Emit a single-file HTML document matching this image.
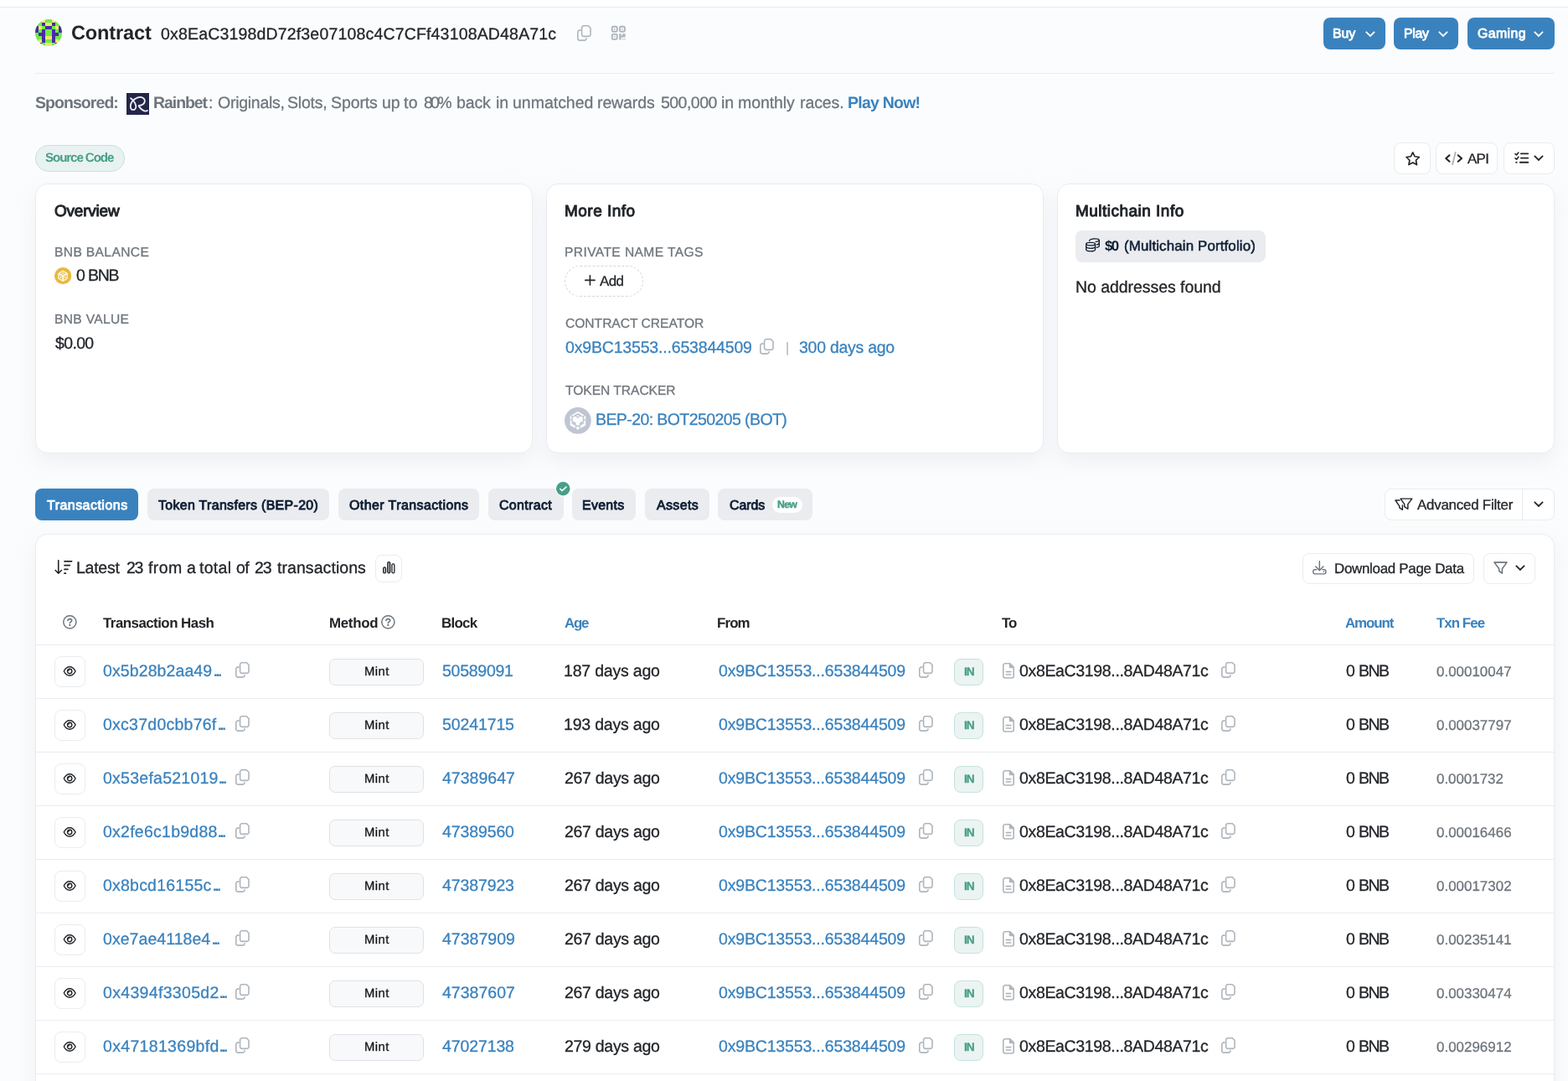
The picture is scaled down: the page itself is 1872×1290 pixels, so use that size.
<!DOCTYPE html>
<html lang="en"><head><meta charset="utf-8"><title>Contract Address 0x8EaC3198dD72f3e07108c4C7CFf43108AD48A71c | BscScan</title>
<style>
html,body{margin:0;padding:0}
body{width:1872px;height:1290px;overflow:hidden;background:#fbfcfd;font-family:"Liberation Sans", sans-serif;position:relative;color:#222529}
.a{position:absolute;box-sizing:border-box}
.t{white-space:pre;will-change:transform;text-rendering:geometricPrecision}
svg.a{overflow:visible}
</style></head><body>
<div class="a" style="left:0px;top:0px;width:1872px;height:8px;background:#fff;border-radius:0px;"></div>
<div class="a" style="left:0px;top:8px;width:1872px;height:1px;background:#e9ecef;border-radius:0px;"></div>
<svg class="a" style="left:42px;top:23px;" width="32" height="32" viewBox="0 0 32 32"><defs><clipPath id="bk"><circle cx="16" cy="16" r="16"/></clipPath></defs><g clip-path="url(#bk)"><rect x="0" y="0" width="4.05" height="4.05" fill="#6eeb4a"/><rect x="4" y="0" width="4.05" height="4.05" fill="#6eeb4a"/><rect x="8" y="0" width="4.05" height="4.05" fill="#ebe96b"/><rect x="12" y="0" width="4.05" height="4.05" fill="#6eeb4a"/><rect x="16" y="0" width="4.05" height="4.05" fill="#6eeb4a"/><rect x="20" y="0" width="4.05" height="4.05" fill="#ebe96b"/><rect x="24" y="0" width="4.05" height="4.05" fill="#6eeb4a"/><rect x="28" y="0" width="4.05" height="4.05" fill="#6eeb4a"/><rect x="0" y="4" width="4.05" height="4.05" fill="#6eeb4a"/><rect x="4" y="4" width="4.05" height="4.05" fill="#6eeb4a"/><rect x="8" y="4" width="4.05" height="4.05" fill="#4a2ba5"/><rect x="12" y="4" width="4.05" height="4.05" fill="#ebe96b"/><rect x="16" y="4" width="4.05" height="4.05" fill="#ebe96b"/><rect x="20" y="4" width="4.05" height="4.05" fill="#4a2ba5"/><rect x="24" y="4" width="4.05" height="4.05" fill="#6eeb4a"/><rect x="28" y="4" width="4.05" height="4.05" fill="#6eeb4a"/><rect x="0" y="8" width="4.05" height="4.05" fill="#4a2ba5"/><rect x="4" y="8" width="4.05" height="4.05" fill="#ebe96b"/><rect x="8" y="8" width="4.05" height="4.05" fill="#6eeb4a"/><rect x="12" y="8" width="4.05" height="4.05" fill="#4a2ba5"/><rect x="16" y="8" width="4.05" height="4.05" fill="#4a2ba5"/><rect x="20" y="8" width="4.05" height="4.05" fill="#6eeb4a"/><rect x="24" y="8" width="4.05" height="4.05" fill="#ebe96b"/><rect x="28" y="8" width="4.05" height="4.05" fill="#4a2ba5"/><rect x="0" y="12" width="4.05" height="4.05" fill="#4a2ba5"/><rect x="4" y="12" width="4.05" height="4.05" fill="#6eeb4a"/><rect x="8" y="12" width="4.05" height="4.05" fill="#4a2ba5"/><rect x="12" y="12" width="4.05" height="4.05" fill="#6eeb4a"/><rect x="16" y="12" width="4.05" height="4.05" fill="#6eeb4a"/><rect x="20" y="12" width="4.05" height="4.05" fill="#4a2ba5"/><rect x="24" y="12" width="4.05" height="4.05" fill="#6eeb4a"/><rect x="28" y="12" width="4.05" height="4.05" fill="#4a2ba5"/><rect x="0" y="16" width="4.05" height="4.05" fill="#6eeb4a"/><rect x="4" y="16" width="4.05" height="4.05" fill="#4a2ba5"/><rect x="8" y="16" width="4.05" height="4.05" fill="#4a2ba5"/><rect x="12" y="16" width="4.05" height="4.05" fill="#6eeb4a"/><rect x="16" y="16" width="4.05" height="4.05" fill="#6eeb4a"/><rect x="20" y="16" width="4.05" height="4.05" fill="#4a2ba5"/><rect x="24" y="16" width="4.05" height="4.05" fill="#4a2ba5"/><rect x="28" y="16" width="4.05" height="4.05" fill="#6eeb4a"/><rect x="0" y="20" width="4.05" height="4.05" fill="#6eeb4a"/><rect x="4" y="20" width="4.05" height="4.05" fill="#6eeb4a"/><rect x="8" y="20" width="4.05" height="4.05" fill="#4a2ba5"/><rect x="12" y="20" width="4.05" height="4.05" fill="#ebe96b"/><rect x="16" y="20" width="4.05" height="4.05" fill="#ebe96b"/><rect x="20" y="20" width="4.05" height="4.05" fill="#4a2ba5"/><rect x="24" y="20" width="4.05" height="4.05" fill="#6eeb4a"/><rect x="28" y="20" width="4.05" height="4.05" fill="#6eeb4a"/><rect x="0" y="24" width="4.05" height="4.05" fill="#6eeb4a"/><rect x="4" y="24" width="4.05" height="4.05" fill="#ebe96b"/><rect x="8" y="24" width="4.05" height="4.05" fill="#4a2ba5"/><rect x="12" y="24" width="4.05" height="4.05" fill="#6eeb4a"/><rect x="16" y="24" width="4.05" height="4.05" fill="#6eeb4a"/><rect x="20" y="24" width="4.05" height="4.05" fill="#4a2ba5"/><rect x="24" y="24" width="4.05" height="4.05" fill="#ebe96b"/><rect x="28" y="24" width="4.05" height="4.05" fill="#6eeb4a"/><rect x="0" y="28" width="4.05" height="4.05" fill="#6eeb4a"/><rect x="4" y="28" width="4.05" height="4.05" fill="#4a2ba5"/><rect x="8" y="28" width="4.05" height="4.05" fill="#6eeb4a"/><rect x="12" y="28" width="4.05" height="4.05" fill="#ebe96b"/><rect x="16" y="28" width="4.05" height="4.05" fill="#ebe96b"/><rect x="20" y="28" width="4.05" height="4.05" fill="#6eeb4a"/><rect x="24" y="28" width="4.05" height="4.05" fill="#4a2ba5"/><rect x="28" y="28" width="4.05" height="4.05" fill="#6eeb4a"/></g></svg>
<svg class="a" style="left:688.7px;top:30.1px;" width="16.8" height="18.9" viewBox="0 0 16.8 18.9"><g fill="none" stroke="#aeb5bc" stroke-width="1.6" stroke-linejoin="round" stroke-linecap="round"><path d="M7.8 0.8h5.5l2.7 2.7v7.7a2.2 2.2 0 0 1-2.2 2.2H7.8a2.2 2.2 0 0 1-2.2-2.2V3a2.2 2.2 0 0 1 2.2-2.2z"/><path d="M4.1 6.1H3a2.2 2.2 0 0 0-2.2 2.2v7.6a2.2 2.2 0 0 0 2.2 2.2h5.8a2.2 2.2 0 0 0 2.2-2.2V15.9"/></g></svg>
<svg class="a" style="left:730.1px;top:31.3px;" width="17" height="17" viewBox="0 0 17 17"><g fill="none" stroke="#aeb5bc" stroke-width="1.9"><rect x="0.75" y="0.75" width="6" height="6" rx="1.4"/><rect x="9.9" y="0.75" width="6" height="6" rx="1.4"/><rect x="0.75" y="9.9" width="6" height="6" rx="1.4"/></g><rect x="3" y="3" width="1.5" height="1.5" fill="#aeb5bc"/><rect x="12.15" y="3" width="1.5" height="1.5" fill="#aeb5bc"/><rect x="3" y="12.15" width="1.5" height="1.5" fill="#aeb5bc"/><path d="M9.2 9.2h2.6v2.2h1.4v-2.2h3.4v4.2h-5v3.2H9.2z" fill="#aeb5bc"/><rect x="13" y="15.2" width="1.3" height="1.3" fill="#aeb5bc"/><rect x="15.3" y="15.2" width="1.3" height="1.3" fill="#aeb5bc"/></svg>
<div class="a" style="left:1580px;top:21px;width:74px;height:38px;background:#3a82be;border-radius:8px;"></div>
<svg class="a" style="left:1629.6px;top:36.65px;" width="11.9" height="6.8" viewBox="0 0 11.9 6.8"><path d="M0.8 0.8L5.95 5.8999999999999995L11.1 0.8" fill="none" stroke="#fff" stroke-width="1.75" stroke-linecap="butt" stroke-linejoin="miter"/></svg>
<div class="a" style="left:1664px;top:21px;width:77px;height:38px;background:#3a82be;border-radius:8px;"></div>
<svg class="a" style="left:1717.45px;top:36.65px;" width="11.9" height="6.8" viewBox="0 0 11.9 6.8"><path d="M0.8 0.8L5.95 5.8999999999999995L11.1 0.8" fill="none" stroke="#fff" stroke-width="1.75" stroke-linecap="butt" stroke-linejoin="miter"/></svg>
<div class="a" style="left:1752px;top:21px;width:104px;height:38px;background:#3a82be;border-radius:8px;"></div>
<svg class="a" style="left:1831.35px;top:36.65px;" width="11.9" height="6.8" viewBox="0 0 11.9 6.8"><path d="M0.8 0.8L5.95 5.8999999999999995L11.1 0.8" fill="none" stroke="#fff" stroke-width="1.75" stroke-linecap="butt" stroke-linejoin="miter"/></svg>
<div class="a" style="left:42px;top:87px;width:1814px;height:1px;background:#e9ecef;border-radius:0px;"></div>
<div class="a" style="left:150px;top:110px;width:29px;height:28px;background:#fff;border-radius:0px;"></div>
<div class="a" style="left:151px;top:111px;width:27px;height:26px;background:#23264a;border-radius:0px;"></div>
<svg class="a" style="left:151px;top:111px;" width="27" height="26" viewBox="0 0 27 26"><path d="M5 6.2C7.2 7.6 10.2 11 11.2 15C11.9 18.2 10.1 20.2 7.9 20.1C5.4 20 4.2 17.5 5 14C5.7 11 7.7 8.6 10.2 7C12.7 5.5 15.5 4.6 18 5.1C20.9 5.8 22.5 8.3 21.6 10.9C20.7 13.4 17.6 14.9 14.6 15.2C16 17.8 18.5 20.3 21.4 21.3C22.9 21.8 24.1 21.5 24.9 21" fill="none" stroke="#efeff5" stroke-width="1.8" stroke-linecap="round" stroke-linejoin="round"/></svg>
<div class="a" style="left:42px;top:173px;width:107px;height:31.7px;background:#e8f2f1;border-radius:16px;border:1px solid #c6e2dc;"></div>
<div class="a" style="left:1664px;top:170.4px;width:43.5px;height:37.2px;background:#fff;border-radius:8px;border:1px solid #e9ecef;"></div>
<div class="a" style="left:1714.3px;top:170.4px;width:74.10000000000014px;height:37.2px;background:#fff;border-radius:8px;border:1px solid #e9ecef;"></div>
<div class="a" style="left:1794.5px;top:170.4px;width:61.200000000000045px;height:37.2px;background:#fff;border-radius:8px;border:1px solid #e9ecef;"></div>
<svg class="a" style="left:1678.1px;top:180.7px;" width="17.4" height="16.8" viewBox="0 0 17.4 16.8"><path d="M8.7 0.9l2.35 4.85 5.35 0.75-3.9 3.75 0.95 5.3L8.7 13l-4.75 2.55 0.95-5.3L1 6.5l5.35-0.75z" fill="none" stroke="#222529" stroke-width="1.7" stroke-linejoin="round"/></svg>
<svg class="a" style="left:1724.9px;top:180.55px;" width="21.4" height="16.3" viewBox="0 0 21.4 16.3"><g fill="none" stroke-linecap="round" stroke-linejoin="round"><path d="M5.5 4.27L1.3 8L5.5 11.75M15.76 4.27L20.05 8L15.76 11.75" stroke="#222529" stroke-width="2.1"/><path d="M12.66 0.9L9.08 15.2" stroke="#a9adb2" stroke-width="1.7"/></g></svg>
<svg class="a" style="left:1807.8px;top:181px;" width="17.2" height="14" viewBox="0 0 17.2 14"><g fill="none" stroke="#222529" stroke-linecap="round" stroke-linejoin="round"><path d="M7.8 2.4H16.4M7.8 7.6H16.4" stroke-width="1.6"/><path d="M6.9 12.8H16.3" stroke-width="1.9"/><path d="M1 2.6L2.6 4L4.9 1.05M1 7.8L2.6 9.2L4.9 6.25" stroke-width="1.6"/></g><rect x="1.45" y="11.85" width="1.9" height="1.9" fill="#222529"/></svg>
<svg class="a" style="left:1831.4px;top:185.15px;" width="11.9" height="6.8" viewBox="0 0 11.9 6.8"><path d="M0.8 0.8L5.95 5.8999999999999995L11.1 0.8" fill="none" stroke="#222529" stroke-width="1.75" stroke-linecap="butt" stroke-linejoin="miter"/></svg>
<div class="a" style="left:42px;top:219px;width:593.8px;height:321.6px;background:#fff;border-radius:14.5px;border:1px solid #e9ecef;box-shadow:0 10.4px 25px rgba(189,197,209,0.2);"></div>
<div class="a" style="left:652.1px;top:219px;width:593.8px;height:321.6px;background:#fff;border-radius:14.5px;border:1px solid #e9ecef;box-shadow:0 10.4px 25px rgba(189,197,209,0.2);"></div>
<div class="a" style="left:1262.2px;top:219px;width:593.8px;height:321.6px;background:#fff;border-radius:14.5px;border:1px solid #e9ecef;box-shadow:0 10.4px 25px rgba(189,197,209,0.2);"></div>
<svg class="a" style="left:64.85px;top:319.2px;" width="20.3" height="20.3" viewBox="0 0 20.3 20.3"><circle cx="10.15" cy="10.15" r="10.15" fill="#e8b93f"/><polygon points="10.10,3.95 15.64,7.15 15.64,13.55 10.10,16.75 4.56,13.55 4.56,7.15" fill="#fffdf6" stroke="#fffdf6" stroke-width="0.5" stroke-linejoin="round"/><polygon points="10.10,4.91 13.98,7.15 10.10,9.39 6.22,7.15" fill="#e8b93f" fill-opacity="0.8"/><circle cx="10.10" cy="7.15" r="0.83" fill="#fffdf6"/><polygon points="5.39,8.59 9.27,10.83 9.27,15.31 5.39,13.07" fill="#e8b93f" fill-opacity="0.8"/><circle cx="7.33" cy="11.95" r="0.83" fill="#fffdf6"/><polygon points="14.81,8.59 14.81,13.07 10.93,15.31 10.93,10.83" fill="#e8b93f" fill-opacity="0.8"/><circle cx="12.87" cy="11.95" r="0.83" fill="#fffdf6"/></svg>
<div class="a" style="left:674px;top:317px;width:94px;height:37px;background:#fff;border-radius:18.5px;border:1px dashed #d3d6da;"></div>
<svg class="a" style="left:697.7px;top:327.8px;" width="12.8" height="12.8" viewBox="0 0 12.8 12.8"><path d="M6.4 0.7v11.4M0.7 6.4h11.4" stroke="#222529" stroke-width="1.6" stroke-linecap="round"/></svg>
<svg class="a" style="left:907px;top:404.3px;" width="16.8" height="18.9" viewBox="0 0 16.8 18.9"><g fill="none" stroke="#aeb5bc" stroke-width="1.6" stroke-linejoin="round" stroke-linecap="round"><path d="M7.8 0.8h5.5l2.7 2.7v7.7a2.2 2.2 0 0 1-2.2 2.2H7.8a2.2 2.2 0 0 1-2.2-2.2V3a2.2 2.2 0 0 1 2.2-2.2z"/><path d="M4.1 6.1H3a2.2 2.2 0 0 0-2.2 2.2v7.6a2.2 2.2 0 0 0 2.2 2.2h5.8a2.2 2.2 0 0 0 2.2-2.2V15.9"/></g></svg>
<svg class="a" style="left:674.1px;top:486.1px;" width="31.8" height="31.8" viewBox="0 0 31.8 31.8"><circle cx="15.9" cy="15.9" r="15.9" fill="#bfc5d3"/><polygon points="15.90,4.90 25.20,10.40 25.20,21.40 15.90,26.90 6.60,21.40 6.60,10.40" fill="#fdfdfe"/><g fill="none" stroke="#bfc5d3" stroke-width="1.30" stroke-linejoin="round"><polygon points="15.75,7.90 22.30,11.65 22.30,19.15 15.75,22.90 9.20,19.15 9.20,11.65"/><polygon points="15.75,8.35 18.45,10.35 15.75,12.35 13.05,10.35"/><path d="M13.45 22.00V26.30M18.15 22.00V26.30"/><path d="M6.60 15.70L9.20 14.20M25.20 15.70L22.30 14.20"/><path d="M9.20 11.65L7.80 9.50M22.30 11.65L24.00 9.50"/></g><polygon points="10.05,16.70 13.45,18.30 13.45,21.00 10.05,19.00" fill="#bfc5d3"/><polygon points="21.45,16.70 18.15,18.30 18.15,21.00 21.45,19.00" fill="#bfc5d3"/></svg>
<div class="a" style="left:1284px;top:275.2px;width:227px;height:37.6px;background:#eaecef;border-radius:8px;"></div>
<svg class="a" style="left:1295.7px;top:284.2px;" width="17.3" height="17" viewBox="0 0 17.3 17"><g fill="none" stroke="#0d1d33" stroke-width="1.35" stroke-linecap="round"><ellipse cx="6.16" cy="7.14" rx="5.4" ry="1.8"/><path d="M0.76 7.14v6.9c0 1 2.42 1.8 5.4 1.8s5.4-0.8 5.4-1.8v-6.9"/><path d="M0.76 10.6c0 1 2.42 1.8 5.4 1.8s5.4-0.8 5.4-1.8"/><path d="M4.6 3.3C5.2 1.9 7.7 0.9 10.9 0.9c3 0 5.4 0.8 5.4 1.8v6.9c0 0.9-1.2 1.5-2.9 1.75"/><path d="M16.3 2.7c0 0.8-1.6 1.5-4.1 1.7"/><path d="M16.3 6.15c0 0.75-1.1 1.4-2.8 1.65"/></g></svg>
<div class="a" style="left:42px;top:583px;width:123px;height:38px;background:#3a82be;border-radius:8px;"></div>
<div class="a" style="left:176px;top:583px;width:217px;height:38px;background:#eaecef;border-radius:8px;"></div>
<div class="a" style="left:404px;top:583px;width:168px;height:38px;background:#eaecef;border-radius:8px;"></div>
<div class="a" style="left:583px;top:583px;width:90px;height:38px;background:#eaecef;border-radius:8px;"></div>
<div class="a" style="left:683px;top:583px;width:76px;height:38px;background:#eaecef;border-radius:8px;"></div>
<div class="a" style="left:770px;top:583px;width:77px;height:38px;background:#eaecef;border-radius:8px;"></div>
<div class="a" style="left:857px;top:583px;width:113px;height:38px;background:#eaecef;border-radius:8px;"></div>
<div class="a" style="left:922px;top:593px;width:36.3px;height:19px;background:#fff;border-radius:9.5px;"></div>
<svg class="a" style="left:663.1px;top:573.7px;" width="18.5" height="18.5" viewBox="0 0 18.5 18.5"><circle cx="9.25" cy="9.25" r="9.25" fill="#fcfdfe"/><circle cx="9.25" cy="9.25" r="8.25" fill="#479f87"/><path d="M5.7 9.3L7.95 11.67L13 7.1" fill="none" stroke="#fff" stroke-width="1.5" stroke-linecap="round" stroke-linejoin="round"/></svg>
<div class="a" style="left:1653.3px;top:583.2px;width:202.5px;height:37.5px;background:#fff;border-radius:8px;border:1px solid #e9ecef;"></div>
<div class="a" style="left:1817px;top:583.2px;width:1px;height:37.5px;background:#e9ecef;border-radius:0px;"></div>
<svg class="a" style="left:1664.8px;top:594.1px;" width="21.2" height="14.9" viewBox="0 0 21.2 14.9"><g fill="none" stroke="#222529" stroke-width="1.45" stroke-linejoin="round" stroke-linecap="round"><path d="M7.05 1.12H20.8L15.87 7.69V13.3L11.7 10.58V7.69z"/><path d="M5.93 2.98H0.95L5.77 10.1V11.86L9.39 14.3V8.9"/></g></svg>
<svg class="a" style="left:1830.5px;top:598.3px;" width="11.9" height="6.8" viewBox="0 0 11.9 6.8"><path d="M0.8 0.8L5.95 5.8999999999999995L11.1 0.8" fill="none" stroke="#222529" stroke-width="1.75" stroke-linecap="butt" stroke-linejoin="miter"/></svg>
<div class="a" style="left:42px;top:637px;width:1814px;height:700px;background:#fff;border-radius:14.5px;border:1px solid #e9ecef;box-shadow:0 10.4px 25px rgba(189,197,209,0.2);"></div>
<svg class="a" style="left:64.73px;top:668px;" width="21.6" height="17.3" viewBox="0 0 21.6 17.3"><g fill="none" stroke="#222529" stroke-linecap="round" stroke-linejoin="round"><path d="M4.74 0.9V16.2M1.1 12.5L4.74 16.2L8.4 12.5" stroke-width="1.6"/><path d="M12 1.76H20.6M12 6.57H18.3M12 11.4H15.9M12 16.25H13.4" stroke-width="1.75"/></g></svg>
<div class="a" style="left:448.3px;top:662.2px;width:31.5px;height:32.5px;background:#fff;border-radius:8px;border:1px solid #e9ecef;"></div>
<svg class="a" style="left:456.8px;top:670.3px;" width="14.5" height="14.6" viewBox="0 0 14.5 14.6"><g stroke="#222529" stroke-width="1.3"><rect x="0.65" y="7" width="2.9" height="6.95" rx="1.45" fill="#c9cbce"/><rect x="5.8" y="0.65" width="2.9" height="13.3" rx="1.45" fill="#a3a6a9"/><rect x="10.95" y="2.8" width="2.9" height="11.15" rx="1.45" fill="#fff"/></g></svg>
<div class="a" style="left:1555px;top:660px;width:204.7px;height:36.7px;background:#fff;border-radius:8px;border:1px solid #e9ecef;"></div>
<svg class="a" style="left:1567px;top:669.3px;" width="16.8" height="16.7" viewBox="0 0 16.8 16.7"><g fill="none" stroke="#6e757c" stroke-width="1.45" stroke-linecap="round" stroke-linejoin="round"><path d="M8.33 0.8V11.6M3.75 7.05L8.33 11.65L12.9 7.05"/><path d="M4.5 10.83H2.8a2 2 0 0 0-2 2v1.04a2 2 0 0 0 2 2h11.07a2 2 0 0 0 2-2v-1.04a2 2 0 0 0-2-2H12"/></g><circle cx="13.46" cy="13.3" r="0.8" fill="#6e757c"/></svg>
<div class="a" style="left:1771px;top:660px;width:61.7px;height:36.7px;background:#fff;border-radius:8px;border:1px solid #e9ecef;"></div>
<svg class="a" style="left:1782.6px;top:670px;" width="17" height="15" viewBox="0 0 17 15"><path d="M1 1.1H16L10.4 8.8V14.1L6.7 11.5V8.8z" fill="none" stroke="#6e757c" stroke-width="1.55" stroke-linejoin="round"/></svg>
<svg class="a" style="left:1809.15px;top:674.2px;" width="11.9" height="6.8" viewBox="0 0 11.9 6.8"><path d="M0.8 0.8L5.95 5.8999999999999995L11.1 0.8" fill="none" stroke="#222529" stroke-width="1.75" stroke-linecap="butt" stroke-linejoin="miter"/></svg>
<svg class="a" style="left:74.9px;top:734.2px;" width="16.7" height="16.7" viewBox="0 0 16.7 16.7"><circle cx="8.35" cy="8.35" r="7.6" fill="none" stroke="#6e757c" stroke-width="1.5"/><path d="M5.9 6.5c0.2-1.2 1.1-1.9 2.4-1.9 1.4 0 2.4 0.8 2.4 2 0 1.5-2.3 1.7-2.3 3.1" fill="none" stroke="#6e757c" stroke-width="1.6" stroke-linecap="round"/><rect x="7.45" y="11.1" width="1.85" height="1.85" rx="0.3" fill="#6e757c"/></svg>
<svg class="a" style="left:454.8px;top:734.1px;" width="16.7" height="16.7" viewBox="0 0 16.7 16.7"><circle cx="8.35" cy="8.35" r="7.6" fill="none" stroke="#6e757c" stroke-width="1.5"/><path d="M5.9 6.5c0.2-1.2 1.1-1.9 2.4-1.9 1.4 0 2.4 0.8 2.4 2 0 1.5-2.3 1.7-2.3 3.1" fill="none" stroke="#6e757c" stroke-width="1.6" stroke-linecap="round"/><rect x="7.45" y="11.1" width="1.85" height="1.85" rx="0.3" fill="#6e757c"/></svg>
<div class="a" style="left:43px;top:769px;width:1812px;height:1px;background:#e9ecef;border-radius:0px;"></div>
<div class="a" style="left:43px;top:833px;width:1812px;height:1px;background:#e9ecef;border-radius:0px;"></div>
<div class="a" style="left:65.2px;top:783.2px;width:36.4px;height:36.4px;background:#fff;border-radius:8px;border:1px solid #e9ecef;"></div>
<svg class="a" style="left:75.4px;top:795px;" width="16" height="12" viewBox="0 0 16 12"><g fill="none" stroke="#222529" stroke-width="1.4"><path d="M1.3 6C3 2.6 5.3 0.8 8.15 0.8S13.4 2.6 15.1 6C13.4 9.4 11 11.2 8.15 11.2S3 9.4 1.3 6z" stroke-linejoin="round"/><circle cx="8.15" cy="6" r="2.7"/></g><path d="M8.15 4.4a1.6 1.6 0 0 0-1.6 1.6" fill="none" stroke="#222529" stroke-width="1.1"/></svg>
<svg class="a" style="left:281.2px;top:790.1px;" width="16.8" height="18.9" viewBox="0 0 16.8 18.9"><g fill="none" stroke="#aeb5bc" stroke-width="1.6" stroke-linejoin="round" stroke-linecap="round"><path d="M7.8 0.8h5.5l2.7 2.7v7.7a2.2 2.2 0 0 1-2.2 2.2H7.8a2.2 2.2 0 0 1-2.2-2.2V3a2.2 2.2 0 0 1 2.2-2.2z"/><path d="M4.1 6.1H3a2.2 2.2 0 0 0-2.2 2.2v7.6a2.2 2.2 0 0 0 2.2 2.2h5.8a2.2 2.2 0 0 0 2.2-2.2V15.9"/></g></svg>
<div class="a" style="left:393px;top:786px;width:113px;height:32px;background:#f8f9fa;border-radius:7px;border:1px solid #dfe2e6;"></div>
<svg class="a" style="left:1097px;top:790.1px;" width="16.8" height="18.9" viewBox="0 0 16.8 18.9"><g fill="none" stroke="#aeb5bc" stroke-width="1.6" stroke-linejoin="round" stroke-linecap="round"><path d="M7.8 0.8h5.5l2.7 2.7v7.7a2.2 2.2 0 0 1-2.2 2.2H7.8a2.2 2.2 0 0 1-2.2-2.2V3a2.2 2.2 0 0 1 2.2-2.2z"/><path d="M4.1 6.1H3a2.2 2.2 0 0 0-2.2 2.2v7.6a2.2 2.2 0 0 0 2.2 2.2h5.8a2.2 2.2 0 0 0 2.2-2.2V15.9"/></g></svg>
<div class="a" style="left:1139.2px;top:786.2px;width:34.7px;height:31.4px;background:#ebf4f2;border-radius:7.8px;border:1px solid #c6e2dc;"></div>
<svg class="a" style="left:1197.1px;top:791.2px;" width="14" height="18.8" viewBox="0 0 14 18.8"><g fill="none" stroke="#aeb5bc" stroke-width="1.6" stroke-linejoin="round" stroke-linecap="round"><path d="M3 0.8h5.6l4.6 4.6v10.4a2.2 2.2 0 0 1-2.2 2.2H3a2.2 2.2 0 0 1-2.2-2.2V3a2.2 2.2 0 0 1 2.2-2.2z"/><path d="M4.2 10.6h5.6M4.2 14h5.6"/><path d="M8.6 0.8v4.6h4.6z" fill="#aeb5bc"/></g></svg>
<svg class="a" style="left:1458.4px;top:790.1px;" width="16.8" height="18.9" viewBox="0 0 16.8 18.9"><g fill="none" stroke="#aeb5bc" stroke-width="1.6" stroke-linejoin="round" stroke-linecap="round"><path d="M7.8 0.8h5.5l2.7 2.7v7.7a2.2 2.2 0 0 1-2.2 2.2H7.8a2.2 2.2 0 0 1-2.2-2.2V3a2.2 2.2 0 0 1 2.2-2.2z"/><path d="M4.1 6.1H3a2.2 2.2 0 0 0-2.2 2.2v7.6a2.2 2.2 0 0 0 2.2 2.2h5.8a2.2 2.2 0 0 0 2.2-2.2V15.9"/></g></svg>
<div class="a" style="left:43px;top:897px;width:1812px;height:1px;background:#e9ecef;border-radius:0px;"></div>
<div class="a" style="left:65.2px;top:847.2px;width:36.4px;height:36.4px;background:#fff;border-radius:8px;border:1px solid #e9ecef;"></div>
<svg class="a" style="left:75.4px;top:859px;" width="16" height="12" viewBox="0 0 16 12"><g fill="none" stroke="#222529" stroke-width="1.4"><path d="M1.3 6C3 2.6 5.3 0.8 8.15 0.8S13.4 2.6 15.1 6C13.4 9.4 11 11.2 8.15 11.2S3 9.4 1.3 6z" stroke-linejoin="round"/><circle cx="8.15" cy="6" r="2.7"/></g><path d="M8.15 4.4a1.6 1.6 0 0 0-1.6 1.6" fill="none" stroke="#222529" stroke-width="1.1"/></svg>
<svg class="a" style="left:281.2px;top:854.1px;" width="16.8" height="18.9" viewBox="0 0 16.8 18.9"><g fill="none" stroke="#aeb5bc" stroke-width="1.6" stroke-linejoin="round" stroke-linecap="round"><path d="M7.8 0.8h5.5l2.7 2.7v7.7a2.2 2.2 0 0 1-2.2 2.2H7.8a2.2 2.2 0 0 1-2.2-2.2V3a2.2 2.2 0 0 1 2.2-2.2z"/><path d="M4.1 6.1H3a2.2 2.2 0 0 0-2.2 2.2v7.6a2.2 2.2 0 0 0 2.2 2.2h5.8a2.2 2.2 0 0 0 2.2-2.2V15.9"/></g></svg>
<div class="a" style="left:393px;top:850px;width:113px;height:32px;background:#f8f9fa;border-radius:7px;border:1px solid #dfe2e6;"></div>
<svg class="a" style="left:1097px;top:854.1px;" width="16.8" height="18.9" viewBox="0 0 16.8 18.9"><g fill="none" stroke="#aeb5bc" stroke-width="1.6" stroke-linejoin="round" stroke-linecap="round"><path d="M7.8 0.8h5.5l2.7 2.7v7.7a2.2 2.2 0 0 1-2.2 2.2H7.8a2.2 2.2 0 0 1-2.2-2.2V3a2.2 2.2 0 0 1 2.2-2.2z"/><path d="M4.1 6.1H3a2.2 2.2 0 0 0-2.2 2.2v7.6a2.2 2.2 0 0 0 2.2 2.2h5.8a2.2 2.2 0 0 0 2.2-2.2V15.9"/></g></svg>
<div class="a" style="left:1139.2px;top:850.2px;width:34.7px;height:31.4px;background:#ebf4f2;border-radius:7.8px;border:1px solid #c6e2dc;"></div>
<svg class="a" style="left:1197.1px;top:855.2px;" width="14" height="18.8" viewBox="0 0 14 18.8"><g fill="none" stroke="#aeb5bc" stroke-width="1.6" stroke-linejoin="round" stroke-linecap="round"><path d="M3 0.8h5.6l4.6 4.6v10.4a2.2 2.2 0 0 1-2.2 2.2H3a2.2 2.2 0 0 1-2.2-2.2V3a2.2 2.2 0 0 1 2.2-2.2z"/><path d="M4.2 10.6h5.6M4.2 14h5.6"/><path d="M8.6 0.8v4.6h4.6z" fill="#aeb5bc"/></g></svg>
<svg class="a" style="left:1458.4px;top:854.1px;" width="16.8" height="18.9" viewBox="0 0 16.8 18.9"><g fill="none" stroke="#aeb5bc" stroke-width="1.6" stroke-linejoin="round" stroke-linecap="round"><path d="M7.8 0.8h5.5l2.7 2.7v7.7a2.2 2.2 0 0 1-2.2 2.2H7.8a2.2 2.2 0 0 1-2.2-2.2V3a2.2 2.2 0 0 1 2.2-2.2z"/><path d="M4.1 6.1H3a2.2 2.2 0 0 0-2.2 2.2v7.6a2.2 2.2 0 0 0 2.2 2.2h5.8a2.2 2.2 0 0 0 2.2-2.2V15.9"/></g></svg>
<div class="a" style="left:43px;top:961px;width:1812px;height:1px;background:#e9ecef;border-radius:0px;"></div>
<div class="a" style="left:65.2px;top:911.2px;width:36.4px;height:36.4px;background:#fff;border-radius:8px;border:1px solid #e9ecef;"></div>
<svg class="a" style="left:75.4px;top:923px;" width="16" height="12" viewBox="0 0 16 12"><g fill="none" stroke="#222529" stroke-width="1.4"><path d="M1.3 6C3 2.6 5.3 0.8 8.15 0.8S13.4 2.6 15.1 6C13.4 9.4 11 11.2 8.15 11.2S3 9.4 1.3 6z" stroke-linejoin="round"/><circle cx="8.15" cy="6" r="2.7"/></g><path d="M8.15 4.4a1.6 1.6 0 0 0-1.6 1.6" fill="none" stroke="#222529" stroke-width="1.1"/></svg>
<svg class="a" style="left:281.2px;top:918.1px;" width="16.8" height="18.9" viewBox="0 0 16.8 18.9"><g fill="none" stroke="#aeb5bc" stroke-width="1.6" stroke-linejoin="round" stroke-linecap="round"><path d="M7.8 0.8h5.5l2.7 2.7v7.7a2.2 2.2 0 0 1-2.2 2.2H7.8a2.2 2.2 0 0 1-2.2-2.2V3a2.2 2.2 0 0 1 2.2-2.2z"/><path d="M4.1 6.1H3a2.2 2.2 0 0 0-2.2 2.2v7.6a2.2 2.2 0 0 0 2.2 2.2h5.8a2.2 2.2 0 0 0 2.2-2.2V15.9"/></g></svg>
<div class="a" style="left:393px;top:914px;width:113px;height:32px;background:#f8f9fa;border-radius:7px;border:1px solid #dfe2e6;"></div>
<svg class="a" style="left:1097px;top:918.1px;" width="16.8" height="18.9" viewBox="0 0 16.8 18.9"><g fill="none" stroke="#aeb5bc" stroke-width="1.6" stroke-linejoin="round" stroke-linecap="round"><path d="M7.8 0.8h5.5l2.7 2.7v7.7a2.2 2.2 0 0 1-2.2 2.2H7.8a2.2 2.2 0 0 1-2.2-2.2V3a2.2 2.2 0 0 1 2.2-2.2z"/><path d="M4.1 6.1H3a2.2 2.2 0 0 0-2.2 2.2v7.6a2.2 2.2 0 0 0 2.2 2.2h5.8a2.2 2.2 0 0 0 2.2-2.2V15.9"/></g></svg>
<div class="a" style="left:1139.2px;top:914.2px;width:34.7px;height:31.4px;background:#ebf4f2;border-radius:7.8px;border:1px solid #c6e2dc;"></div>
<svg class="a" style="left:1197.1px;top:919.2px;" width="14" height="18.8" viewBox="0 0 14 18.8"><g fill="none" stroke="#aeb5bc" stroke-width="1.6" stroke-linejoin="round" stroke-linecap="round"><path d="M3 0.8h5.6l4.6 4.6v10.4a2.2 2.2 0 0 1-2.2 2.2H3a2.2 2.2 0 0 1-2.2-2.2V3a2.2 2.2 0 0 1 2.2-2.2z"/><path d="M4.2 10.6h5.6M4.2 14h5.6"/><path d="M8.6 0.8v4.6h4.6z" fill="#aeb5bc"/></g></svg>
<svg class="a" style="left:1458.4px;top:918.1px;" width="16.8" height="18.9" viewBox="0 0 16.8 18.9"><g fill="none" stroke="#aeb5bc" stroke-width="1.6" stroke-linejoin="round" stroke-linecap="round"><path d="M7.8 0.8h5.5l2.7 2.7v7.7a2.2 2.2 0 0 1-2.2 2.2H7.8a2.2 2.2 0 0 1-2.2-2.2V3a2.2 2.2 0 0 1 2.2-2.2z"/><path d="M4.1 6.1H3a2.2 2.2 0 0 0-2.2 2.2v7.6a2.2 2.2 0 0 0 2.2 2.2h5.8a2.2 2.2 0 0 0 2.2-2.2V15.9"/></g></svg>
<div class="a" style="left:43px;top:1025px;width:1812px;height:1px;background:#e9ecef;border-radius:0px;"></div>
<div class="a" style="left:65.2px;top:975.2px;width:36.4px;height:36.4px;background:#fff;border-radius:8px;border:1px solid #e9ecef;"></div>
<svg class="a" style="left:75.4px;top:987px;" width="16" height="12" viewBox="0 0 16 12"><g fill="none" stroke="#222529" stroke-width="1.4"><path d="M1.3 6C3 2.6 5.3 0.8 8.15 0.8S13.4 2.6 15.1 6C13.4 9.4 11 11.2 8.15 11.2S3 9.4 1.3 6z" stroke-linejoin="round"/><circle cx="8.15" cy="6" r="2.7"/></g><path d="M8.15 4.4a1.6 1.6 0 0 0-1.6 1.6" fill="none" stroke="#222529" stroke-width="1.1"/></svg>
<svg class="a" style="left:281.2px;top:982.1px;" width="16.8" height="18.9" viewBox="0 0 16.8 18.9"><g fill="none" stroke="#aeb5bc" stroke-width="1.6" stroke-linejoin="round" stroke-linecap="round"><path d="M7.8 0.8h5.5l2.7 2.7v7.7a2.2 2.2 0 0 1-2.2 2.2H7.8a2.2 2.2 0 0 1-2.2-2.2V3a2.2 2.2 0 0 1 2.2-2.2z"/><path d="M4.1 6.1H3a2.2 2.2 0 0 0-2.2 2.2v7.6a2.2 2.2 0 0 0 2.2 2.2h5.8a2.2 2.2 0 0 0 2.2-2.2V15.9"/></g></svg>
<div class="a" style="left:393px;top:978px;width:113px;height:32px;background:#f8f9fa;border-radius:7px;border:1px solid #dfe2e6;"></div>
<svg class="a" style="left:1097px;top:982.1px;" width="16.8" height="18.9" viewBox="0 0 16.8 18.9"><g fill="none" stroke="#aeb5bc" stroke-width="1.6" stroke-linejoin="round" stroke-linecap="round"><path d="M7.8 0.8h5.5l2.7 2.7v7.7a2.2 2.2 0 0 1-2.2 2.2H7.8a2.2 2.2 0 0 1-2.2-2.2V3a2.2 2.2 0 0 1 2.2-2.2z"/><path d="M4.1 6.1H3a2.2 2.2 0 0 0-2.2 2.2v7.6a2.2 2.2 0 0 0 2.2 2.2h5.8a2.2 2.2 0 0 0 2.2-2.2V15.9"/></g></svg>
<div class="a" style="left:1139.2px;top:978.2px;width:34.7px;height:31.4px;background:#ebf4f2;border-radius:7.8px;border:1px solid #c6e2dc;"></div>
<svg class="a" style="left:1197.1px;top:983.2px;" width="14" height="18.8" viewBox="0 0 14 18.8"><g fill="none" stroke="#aeb5bc" stroke-width="1.6" stroke-linejoin="round" stroke-linecap="round"><path d="M3 0.8h5.6l4.6 4.6v10.4a2.2 2.2 0 0 1-2.2 2.2H3a2.2 2.2 0 0 1-2.2-2.2V3a2.2 2.2 0 0 1 2.2-2.2z"/><path d="M4.2 10.6h5.6M4.2 14h5.6"/><path d="M8.6 0.8v4.6h4.6z" fill="#aeb5bc"/></g></svg>
<svg class="a" style="left:1458.4px;top:982.1px;" width="16.8" height="18.9" viewBox="0 0 16.8 18.9"><g fill="none" stroke="#aeb5bc" stroke-width="1.6" stroke-linejoin="round" stroke-linecap="round"><path d="M7.8 0.8h5.5l2.7 2.7v7.7a2.2 2.2 0 0 1-2.2 2.2H7.8a2.2 2.2 0 0 1-2.2-2.2V3a2.2 2.2 0 0 1 2.2-2.2z"/><path d="M4.1 6.1H3a2.2 2.2 0 0 0-2.2 2.2v7.6a2.2 2.2 0 0 0 2.2 2.2h5.8a2.2 2.2 0 0 0 2.2-2.2V15.9"/></g></svg>
<div class="a" style="left:43px;top:1089px;width:1812px;height:1px;background:#e9ecef;border-radius:0px;"></div>
<div class="a" style="left:65.2px;top:1039.2px;width:36.4px;height:36.4px;background:#fff;border-radius:8px;border:1px solid #e9ecef;"></div>
<svg class="a" style="left:75.4px;top:1051px;" width="16" height="12" viewBox="0 0 16 12"><g fill="none" stroke="#222529" stroke-width="1.4"><path d="M1.3 6C3 2.6 5.3 0.8 8.15 0.8S13.4 2.6 15.1 6C13.4 9.4 11 11.2 8.15 11.2S3 9.4 1.3 6z" stroke-linejoin="round"/><circle cx="8.15" cy="6" r="2.7"/></g><path d="M8.15 4.4a1.6 1.6 0 0 0-1.6 1.6" fill="none" stroke="#222529" stroke-width="1.1"/></svg>
<svg class="a" style="left:281.2px;top:1046.1px;" width="16.8" height="18.9" viewBox="0 0 16.8 18.9"><g fill="none" stroke="#aeb5bc" stroke-width="1.6" stroke-linejoin="round" stroke-linecap="round"><path d="M7.8 0.8h5.5l2.7 2.7v7.7a2.2 2.2 0 0 1-2.2 2.2H7.8a2.2 2.2 0 0 1-2.2-2.2V3a2.2 2.2 0 0 1 2.2-2.2z"/><path d="M4.1 6.1H3a2.2 2.2 0 0 0-2.2 2.2v7.6a2.2 2.2 0 0 0 2.2 2.2h5.8a2.2 2.2 0 0 0 2.2-2.2V15.9"/></g></svg>
<div class="a" style="left:393px;top:1042px;width:113px;height:32px;background:#f8f9fa;border-radius:7px;border:1px solid #dfe2e6;"></div>
<svg class="a" style="left:1097px;top:1046.1px;" width="16.8" height="18.9" viewBox="0 0 16.8 18.9"><g fill="none" stroke="#aeb5bc" stroke-width="1.6" stroke-linejoin="round" stroke-linecap="round"><path d="M7.8 0.8h5.5l2.7 2.7v7.7a2.2 2.2 0 0 1-2.2 2.2H7.8a2.2 2.2 0 0 1-2.2-2.2V3a2.2 2.2 0 0 1 2.2-2.2z"/><path d="M4.1 6.1H3a2.2 2.2 0 0 0-2.2 2.2v7.6a2.2 2.2 0 0 0 2.2 2.2h5.8a2.2 2.2 0 0 0 2.2-2.2V15.9"/></g></svg>
<div class="a" style="left:1139.2px;top:1042.2px;width:34.7px;height:31.4px;background:#ebf4f2;border-radius:7.8px;border:1px solid #c6e2dc;"></div>
<svg class="a" style="left:1197.1px;top:1047.2px;" width="14" height="18.8" viewBox="0 0 14 18.8"><g fill="none" stroke="#aeb5bc" stroke-width="1.6" stroke-linejoin="round" stroke-linecap="round"><path d="M3 0.8h5.6l4.6 4.6v10.4a2.2 2.2 0 0 1-2.2 2.2H3a2.2 2.2 0 0 1-2.2-2.2V3a2.2 2.2 0 0 1 2.2-2.2z"/><path d="M4.2 10.6h5.6M4.2 14h5.6"/><path d="M8.6 0.8v4.6h4.6z" fill="#aeb5bc"/></g></svg>
<svg class="a" style="left:1458.4px;top:1046.1px;" width="16.8" height="18.9" viewBox="0 0 16.8 18.9"><g fill="none" stroke="#aeb5bc" stroke-width="1.6" stroke-linejoin="round" stroke-linecap="round"><path d="M7.8 0.8h5.5l2.7 2.7v7.7a2.2 2.2 0 0 1-2.2 2.2H7.8a2.2 2.2 0 0 1-2.2-2.2V3a2.2 2.2 0 0 1 2.2-2.2z"/><path d="M4.1 6.1H3a2.2 2.2 0 0 0-2.2 2.2v7.6a2.2 2.2 0 0 0 2.2 2.2h5.8a2.2 2.2 0 0 0 2.2-2.2V15.9"/></g></svg>
<div class="a" style="left:43px;top:1153px;width:1812px;height:1px;background:#e9ecef;border-radius:0px;"></div>
<div class="a" style="left:65.2px;top:1103.2px;width:36.4px;height:36.4px;background:#fff;border-radius:8px;border:1px solid #e9ecef;"></div>
<svg class="a" style="left:75.4px;top:1115px;" width="16" height="12" viewBox="0 0 16 12"><g fill="none" stroke="#222529" stroke-width="1.4"><path d="M1.3 6C3 2.6 5.3 0.8 8.15 0.8S13.4 2.6 15.1 6C13.4 9.4 11 11.2 8.15 11.2S3 9.4 1.3 6z" stroke-linejoin="round"/><circle cx="8.15" cy="6" r="2.7"/></g><path d="M8.15 4.4a1.6 1.6 0 0 0-1.6 1.6" fill="none" stroke="#222529" stroke-width="1.1"/></svg>
<svg class="a" style="left:281.2px;top:1110.1px;" width="16.8" height="18.9" viewBox="0 0 16.8 18.9"><g fill="none" stroke="#aeb5bc" stroke-width="1.6" stroke-linejoin="round" stroke-linecap="round"><path d="M7.8 0.8h5.5l2.7 2.7v7.7a2.2 2.2 0 0 1-2.2 2.2H7.8a2.2 2.2 0 0 1-2.2-2.2V3a2.2 2.2 0 0 1 2.2-2.2z"/><path d="M4.1 6.1H3a2.2 2.2 0 0 0-2.2 2.2v7.6a2.2 2.2 0 0 0 2.2 2.2h5.8a2.2 2.2 0 0 0 2.2-2.2V15.9"/></g></svg>
<div class="a" style="left:393px;top:1106px;width:113px;height:32px;background:#f8f9fa;border-radius:7px;border:1px solid #dfe2e6;"></div>
<svg class="a" style="left:1097px;top:1110.1px;" width="16.8" height="18.9" viewBox="0 0 16.8 18.9"><g fill="none" stroke="#aeb5bc" stroke-width="1.6" stroke-linejoin="round" stroke-linecap="round"><path d="M7.8 0.8h5.5l2.7 2.7v7.7a2.2 2.2 0 0 1-2.2 2.2H7.8a2.2 2.2 0 0 1-2.2-2.2V3a2.2 2.2 0 0 1 2.2-2.2z"/><path d="M4.1 6.1H3a2.2 2.2 0 0 0-2.2 2.2v7.6a2.2 2.2 0 0 0 2.2 2.2h5.8a2.2 2.2 0 0 0 2.2-2.2V15.9"/></g></svg>
<div class="a" style="left:1139.2px;top:1106.2px;width:34.7px;height:31.4px;background:#ebf4f2;border-radius:7.8px;border:1px solid #c6e2dc;"></div>
<svg class="a" style="left:1197.1px;top:1111.2px;" width="14" height="18.8" viewBox="0 0 14 18.8"><g fill="none" stroke="#aeb5bc" stroke-width="1.6" stroke-linejoin="round" stroke-linecap="round"><path d="M3 0.8h5.6l4.6 4.6v10.4a2.2 2.2 0 0 1-2.2 2.2H3a2.2 2.2 0 0 1-2.2-2.2V3a2.2 2.2 0 0 1 2.2-2.2z"/><path d="M4.2 10.6h5.6M4.2 14h5.6"/><path d="M8.6 0.8v4.6h4.6z" fill="#aeb5bc"/></g></svg>
<svg class="a" style="left:1458.4px;top:1110.1px;" width="16.8" height="18.9" viewBox="0 0 16.8 18.9"><g fill="none" stroke="#aeb5bc" stroke-width="1.6" stroke-linejoin="round" stroke-linecap="round"><path d="M7.8 0.8h5.5l2.7 2.7v7.7a2.2 2.2 0 0 1-2.2 2.2H7.8a2.2 2.2 0 0 1-2.2-2.2V3a2.2 2.2 0 0 1 2.2-2.2z"/><path d="M4.1 6.1H3a2.2 2.2 0 0 0-2.2 2.2v7.6a2.2 2.2 0 0 0 2.2 2.2h5.8a2.2 2.2 0 0 0 2.2-2.2V15.9"/></g></svg>
<div class="a" style="left:43px;top:1217px;width:1812px;height:1px;background:#e9ecef;border-radius:0px;"></div>
<div class="a" style="left:65.2px;top:1167.2px;width:36.4px;height:36.4px;background:#fff;border-radius:8px;border:1px solid #e9ecef;"></div>
<svg class="a" style="left:75.4px;top:1179px;" width="16" height="12" viewBox="0 0 16 12"><g fill="none" stroke="#222529" stroke-width="1.4"><path d="M1.3 6C3 2.6 5.3 0.8 8.15 0.8S13.4 2.6 15.1 6C13.4 9.4 11 11.2 8.15 11.2S3 9.4 1.3 6z" stroke-linejoin="round"/><circle cx="8.15" cy="6" r="2.7"/></g><path d="M8.15 4.4a1.6 1.6 0 0 0-1.6 1.6" fill="none" stroke="#222529" stroke-width="1.1"/></svg>
<svg class="a" style="left:281.2px;top:1174.1px;" width="16.8" height="18.9" viewBox="0 0 16.8 18.9"><g fill="none" stroke="#aeb5bc" stroke-width="1.6" stroke-linejoin="round" stroke-linecap="round"><path d="M7.8 0.8h5.5l2.7 2.7v7.7a2.2 2.2 0 0 1-2.2 2.2H7.8a2.2 2.2 0 0 1-2.2-2.2V3a2.2 2.2 0 0 1 2.2-2.2z"/><path d="M4.1 6.1H3a2.2 2.2 0 0 0-2.2 2.2v7.6a2.2 2.2 0 0 0 2.2 2.2h5.8a2.2 2.2 0 0 0 2.2-2.2V15.9"/></g></svg>
<div class="a" style="left:393px;top:1170px;width:113px;height:32px;background:#f8f9fa;border-radius:7px;border:1px solid #dfe2e6;"></div>
<svg class="a" style="left:1097px;top:1174.1px;" width="16.8" height="18.9" viewBox="0 0 16.8 18.9"><g fill="none" stroke="#aeb5bc" stroke-width="1.6" stroke-linejoin="round" stroke-linecap="round"><path d="M7.8 0.8h5.5l2.7 2.7v7.7a2.2 2.2 0 0 1-2.2 2.2H7.8a2.2 2.2 0 0 1-2.2-2.2V3a2.2 2.2 0 0 1 2.2-2.2z"/><path d="M4.1 6.1H3a2.2 2.2 0 0 0-2.2 2.2v7.6a2.2 2.2 0 0 0 2.2 2.2h5.8a2.2 2.2 0 0 0 2.2-2.2V15.9"/></g></svg>
<div class="a" style="left:1139.2px;top:1170.2px;width:34.7px;height:31.4px;background:#ebf4f2;border-radius:7.8px;border:1px solid #c6e2dc;"></div>
<svg class="a" style="left:1197.1px;top:1175.2px;" width="14" height="18.8" viewBox="0 0 14 18.8"><g fill="none" stroke="#aeb5bc" stroke-width="1.6" stroke-linejoin="round" stroke-linecap="round"><path d="M3 0.8h5.6l4.6 4.6v10.4a2.2 2.2 0 0 1-2.2 2.2H3a2.2 2.2 0 0 1-2.2-2.2V3a2.2 2.2 0 0 1 2.2-2.2z"/><path d="M4.2 10.6h5.6M4.2 14h5.6"/><path d="M8.6 0.8v4.6h4.6z" fill="#aeb5bc"/></g></svg>
<svg class="a" style="left:1458.4px;top:1174.1px;" width="16.8" height="18.9" viewBox="0 0 16.8 18.9"><g fill="none" stroke="#aeb5bc" stroke-width="1.6" stroke-linejoin="round" stroke-linecap="round"><path d="M7.8 0.8h5.5l2.7 2.7v7.7a2.2 2.2 0 0 1-2.2 2.2H7.8a2.2 2.2 0 0 1-2.2-2.2V3a2.2 2.2 0 0 1 2.2-2.2z"/><path d="M4.1 6.1H3a2.2 2.2 0 0 0-2.2 2.2v7.6a2.2 2.2 0 0 0 2.2 2.2h5.8a2.2 2.2 0 0 0 2.2-2.2V15.9"/></g></svg>
<div class="a" style="left:43px;top:1281px;width:1812px;height:1px;background:#e9ecef;border-radius:0px;"></div>
<div class="a" style="left:65.2px;top:1231.2px;width:36.4px;height:36.4px;background:#fff;border-radius:8px;border:1px solid #e9ecef;"></div>
<svg class="a" style="left:75.4px;top:1243px;" width="16" height="12" viewBox="0 0 16 12"><g fill="none" stroke="#222529" stroke-width="1.4"><path d="M1.3 6C3 2.6 5.3 0.8 8.15 0.8S13.4 2.6 15.1 6C13.4 9.4 11 11.2 8.15 11.2S3 9.4 1.3 6z" stroke-linejoin="round"/><circle cx="8.15" cy="6" r="2.7"/></g><path d="M8.15 4.4a1.6 1.6 0 0 0-1.6 1.6" fill="none" stroke="#222529" stroke-width="1.1"/></svg>
<svg class="a" style="left:281.2px;top:1238.1px;" width="16.8" height="18.9" viewBox="0 0 16.8 18.9"><g fill="none" stroke="#aeb5bc" stroke-width="1.6" stroke-linejoin="round" stroke-linecap="round"><path d="M7.8 0.8h5.5l2.7 2.7v7.7a2.2 2.2 0 0 1-2.2 2.2H7.8a2.2 2.2 0 0 1-2.2-2.2V3a2.2 2.2 0 0 1 2.2-2.2z"/><path d="M4.1 6.1H3a2.2 2.2 0 0 0-2.2 2.2v7.6a2.2 2.2 0 0 0 2.2 2.2h5.8a2.2 2.2 0 0 0 2.2-2.2V15.9"/></g></svg>
<div class="a" style="left:393px;top:1234px;width:113px;height:32px;background:#f8f9fa;border-radius:7px;border:1px solid #dfe2e6;"></div>
<svg class="a" style="left:1097px;top:1238.1px;" width="16.8" height="18.9" viewBox="0 0 16.8 18.9"><g fill="none" stroke="#aeb5bc" stroke-width="1.6" stroke-linejoin="round" stroke-linecap="round"><path d="M7.8 0.8h5.5l2.7 2.7v7.7a2.2 2.2 0 0 1-2.2 2.2H7.8a2.2 2.2 0 0 1-2.2-2.2V3a2.2 2.2 0 0 1 2.2-2.2z"/><path d="M4.1 6.1H3a2.2 2.2 0 0 0-2.2 2.2v7.6a2.2 2.2 0 0 0 2.2 2.2h5.8a2.2 2.2 0 0 0 2.2-2.2V15.9"/></g></svg>
<div class="a" style="left:1139.2px;top:1234.2px;width:34.7px;height:31.4px;background:#ebf4f2;border-radius:7.8px;border:1px solid #c6e2dc;"></div>
<svg class="a" style="left:1197.1px;top:1239.2px;" width="14" height="18.8" viewBox="0 0 14 18.8"><g fill="none" stroke="#aeb5bc" stroke-width="1.6" stroke-linejoin="round" stroke-linecap="round"><path d="M3 0.8h5.6l4.6 4.6v10.4a2.2 2.2 0 0 1-2.2 2.2H3a2.2 2.2 0 0 1-2.2-2.2V3a2.2 2.2 0 0 1 2.2-2.2z"/><path d="M4.2 10.6h5.6M4.2 14h5.6"/><path d="M8.6 0.8v4.6h4.6z" fill="#aeb5bc"/></g></svg>
<svg class="a" style="left:1458.4px;top:1238.1px;" width="16.8" height="18.9" viewBox="0 0 16.8 18.9"><g fill="none" stroke="#aeb5bc" stroke-width="1.6" stroke-linejoin="round" stroke-linecap="round"><path d="M7.8 0.8h5.5l2.7 2.7v7.7a2.2 2.2 0 0 1-2.2 2.2H7.8a2.2 2.2 0 0 1-2.2-2.2V3a2.2 2.2 0 0 1 2.2-2.2z"/><path d="M4.1 6.1H3a2.2 2.2 0 0 0-2.2 2.2v7.6a2.2 2.2 0 0 0 2.2 2.2h5.8a2.2 2.2 0 0 0 2.2-2.2V15.9"/></g></svg>
<span class="a t" style="left:85.00px;top:22.00px;line-height:35px;font-size:23.56px;font-weight:700;color:#222529;letter-spacing:-0.143px;">Contract</span>
<span class="a t" style="left:192.00px;top:27.00px;line-height:29px;font-size:19.5px;font-weight:400;color:#222529;letter-spacing:0.171px;-webkit-text-stroke:0.3px #222529;">0x8EaC3198dD72f3e07108c4C7CFf43108AD48A71c</span>
<span class="a t" style="left:1591.40px;top:28.80px;line-height:24px;font-size:15.9px;font-weight:400;color:#fff;letter-spacing:-0.100px;-webkit-text-stroke:0.8px #fff;">Buy</span>
<span class="a t" style="left:1675.60px;top:28.80px;line-height:24px;font-size:15.9px;font-weight:400;color:#fff;letter-spacing:-0.300px;-webkit-text-stroke:0.8px #fff;">Play</span>
<span class="a t" style="left:1764.20px;top:28.80px;line-height:24px;font-size:15.9px;font-weight:400;color:#fff;letter-spacing:0.380px;-webkit-text-stroke:0.8px #fff;">Gaming</span>
<span class="a t" style="left:41.80px;top:108.70px;line-height:29px;font-size:19.5px;font-weight:700;color:#6e757c;letter-spacing:-0.944px;">Sponsored:</span>
<span class="a t" style="left:182.80px;top:108.70px;line-height:29px;font-size:19.5px;font-weight:700;color:#6e757c;letter-spacing:-1.067px;">Rainbet</span>
<span class="a t" style="left:249.30px;top:108.70px;line-height:29px;font-size:19.5px;font-weight:400;color:#6e757c;-webkit-text-stroke:0.3px #6e757c;">:</span>
<span class="a t" style="left:259.70px;top:108.70px;line-height:29px;font-size:19.5px;font-weight:400;color:#6e757c;letter-spacing:-0.267px;-webkit-text-stroke:0.3px #6e757c;">Originals,</span>
<span class="a t" style="left:342.60px;top:108.70px;line-height:29px;font-size:19.5px;font-weight:400;color:#6e757c;letter-spacing:-0.200px;-webkit-text-stroke:0.3px #6e757c;">Slots,</span>
<span class="a t" style="left:395.00px;top:108.70px;line-height:29px;font-size:19.5px;font-weight:400;color:#6e757c;letter-spacing:-0.100px;-webkit-text-stroke:0.3px #6e757c;">Sports</span>
<span class="a t" style="left:455.90px;top:108.70px;line-height:29px;font-size:19.5px;font-weight:400;color:#6e757c;letter-spacing:-0.100px;-webkit-text-stroke:0.3px #6e757c;">up</span>
<span class="a t" style="left:482.10px;top:108.70px;line-height:29px;font-size:19.5px;font-weight:400;color:#6e757c;letter-spacing:0.400px;-webkit-text-stroke:0.3px #6e757c;">to</span>
<span class="a t" style="left:505.60px;top:108.70px;line-height:29px;font-size:19.5px;font-weight:400;color:#6e757c;letter-spacing:-2.750px;-webkit-text-stroke:0.3px #6e757c;">80%</span>
<span class="a t" style="left:545.00px;top:108.70px;line-height:29px;font-size:19.5px;font-weight:400;color:#6e757c;letter-spacing:-0.133px;-webkit-text-stroke:0.3px #6e757c;">back</span>
<span class="a t" style="left:592.00px;top:108.70px;line-height:29px;font-size:19.5px;font-weight:400;color:#6e757c;letter-spacing:-0.200px;-webkit-text-stroke:0.3px #6e757c;">in</span>
<span class="a t" style="left:611.60px;top:108.70px;line-height:29px;font-size:19.5px;font-weight:400;color:#6e757c;letter-spacing:-0.013px;-webkit-text-stroke:0.3px #6e757c;">unmatched</span>
<span class="a t" style="left:713.30px;top:108.70px;line-height:29px;font-size:19.5px;font-weight:400;color:#6e757c;letter-spacing:-0.117px;-webkit-text-stroke:0.3px #6e757c;">rewards</span>
<span class="a t" style="left:788.50px;top:108.70px;line-height:29px;font-size:19.5px;font-weight:400;color:#6e757c;letter-spacing:-0.533px;-webkit-text-stroke:0.3px #6e757c;">500,000</span>
<span class="a t" style="left:860.80px;top:108.70px;line-height:29px;font-size:19.5px;font-weight:400;color:#6e757c;letter-spacing:-0.200px;-webkit-text-stroke:0.3px #6e757c;">in</span>
<span class="a t" style="left:881.00px;top:108.70px;line-height:29px;font-size:19.5px;font-weight:400;color:#6e757c;letter-spacing:-0.100px;-webkit-text-stroke:0.3px #6e757c;">monthly</span>
<span class="a t" style="left:954.80px;top:108.70px;line-height:29px;font-size:19.5px;font-weight:400;color:#6e757c;letter-spacing:-0.080px;-webkit-text-stroke:0.3px #6e757c;">races.</span>
<span class="a t" style="left:1012.40px;top:108.70px;line-height:29px;font-size:19.5px;font-weight:700;color:#3a82be;letter-spacing:-0.763px;">Play Now!</span>
<span class="a t" style="left:54.40px;top:177.00px;line-height:23px;font-size:15.2px;font-weight:700;color:#479f87;letter-spacing:-1.120px;">Source Code</span>
<span class="a t" style="left:1752.00px;top:176.90px;line-height:25px;font-size:16.9px;font-weight:400;color:#222529;letter-spacing:-0.700px;-webkit-text-stroke:0.3px #222529;">API</span>
<span class="a t" style="left:65.20px;top:238.80px;line-height:28px;font-size:19.0px;font-weight:400;color:#222529;letter-spacing:-0.214px;-webkit-text-stroke:0.95px #222529;">Overview</span>
<span class="a t" style="left:64.60px;top:290.00px;line-height:23px;font-size:15.6px;font-weight:400;color:#6e757c;letter-spacing:0.360px;-webkit-text-stroke:0.3px #6e757c;">BNB BALANCE</span>
<span class="a t" style="left:90.80px;top:315.20px;line-height:29px;font-size:19.5px;font-weight:400;color:#222529;-webkit-text-stroke:0.3px #222529;">0</span>
<span class="a t" style="left:105.40px;top:315.20px;line-height:29px;font-size:19.5px;font-weight:400;color:#222529;letter-spacing:-1.250px;-webkit-text-stroke:0.3px #222529;">BNB</span>
<span class="a t" style="left:64.60px;top:369.80px;line-height:23px;font-size:15.6px;font-weight:400;color:#6e757c;letter-spacing:0.312px;-webkit-text-stroke:0.3px #6e757c;">BNB VALUE</span>
<span class="a t" style="left:65.70px;top:395.50px;line-height:29px;font-size:19.5px;font-weight:400;color:#222529;letter-spacing:-0.650px;-webkit-text-stroke:0.3px #222529;">$0.00</span>
<span class="a t" style="left:673.90px;top:238.80px;line-height:28px;font-size:19.0px;font-weight:400;color:#222529;letter-spacing:0.487px;-webkit-text-stroke:0.95px #222529;">More Info</span>
<span class="a t" style="left:674.20px;top:290.00px;line-height:23px;font-size:15.6px;font-weight:400;color:#6e757c;letter-spacing:0.394px;-webkit-text-stroke:0.3px #6e757c;">PRIVATE NAME TAGS</span>
<span class="a t" style="left:716.00px;top:322.80px;line-height:25px;font-size:16.9px;font-weight:400;color:#222529;letter-spacing:-0.600px;-webkit-text-stroke:0.3px #222529;">Add</span>
<span class="a t" style="left:675.20px;top:374.80px;line-height:23px;font-size:15.6px;font-weight:400;color:#6e757c;letter-spacing:-0.013px;-webkit-text-stroke:0.3px #6e757c;">CONTRACT CREATOR</span>
<span class="a t" style="left:674.90px;top:400.90px;line-height:29px;font-size:19.5px;font-weight:400;color:#3a82be;letter-spacing:-0.176px;-webkit-text-stroke:0.3px #3a82be;">0x9BC13553...653844509</span>
<span class="a t" style="left:938.00px;top:404.30px;line-height:24px;font-size:16px;font-weight:400;color:#b3b9c0;-webkit-text-stroke:0.3px #b3b9c0;">|</span>
<span class="a t" style="left:953.70px;top:400.90px;line-height:29px;font-size:19.5px;font-weight:400;color:#3a82be;letter-spacing:-0.264px;-webkit-text-stroke:0.3px #3a82be;">300 days ago</span>
<span class="a t" style="left:675.20px;top:454.60px;line-height:23px;font-size:15.6px;font-weight:400;color:#6e757c;letter-spacing:-0.033px;-webkit-text-stroke:0.3px #6e757c;">TOKEN TRACKER</span>
<span class="a t" style="left:711.40px;top:487.40px;line-height:29px;font-size:19.5px;font-weight:400;color:#3a82be;letter-spacing:-0.586px;-webkit-text-stroke:0.3px #3a82be;">BEP-20: BOT250205 (BOT)</span>
<span class="a t" style="left:1283.70px;top:238.80px;line-height:28px;font-size:19.0px;font-weight:400;color:#222529;letter-spacing:0.479px;-webkit-text-stroke:0.95px #222529;">Multichain Info</span>
<span class="a t" style="left:1318.90px;top:280.70px;line-height:25px;font-size:16.9px;font-weight:700;color:#0d1d33;letter-spacing:-1.700px;">$0</span>
<span class="a t" style="left:1341.80px;top:280.70px;line-height:25px;font-size:16.9px;font-weight:400;color:#0d1d33;letter-spacing:0.138px;-webkit-text-stroke:0.5px #0d1d33;">(Multichain Portfolio)</span>
<span class="a t" style="left:1283.90px;top:328.90px;line-height:29px;font-size:19.5px;font-weight:400;color:#222529;letter-spacing:-0.053px;-webkit-text-stroke:0.3px #222529;">No addresses found</span>
<span class="a t" style="left:55.50px;top:591.70px;line-height:24px;font-size:15.9px;font-weight:400;color:#fff;letter-spacing:0.518px;-webkit-text-stroke:0.85px #fff;">Transactions</span>
<span class="a t" style="left:189.20px;top:591.70px;line-height:24px;font-size:15.9px;font-weight:400;color:#0d1d33;letter-spacing:0.348px;-webkit-text-stroke:0.85px #0d1d33;">Token Transfers (BEP-20)</span>
<span class="a t" style="left:417.30px;top:591.70px;line-height:24px;font-size:15.9px;font-weight:400;color:#0d1d33;letter-spacing:0.453px;-webkit-text-stroke:0.85px #0d1d33;">Other Transactions</span>
<span class="a t" style="left:595.90px;top:591.70px;line-height:24px;font-size:15.9px;font-weight:400;color:#0d1d33;letter-spacing:0.386px;-webkit-text-stroke:0.85px #0d1d33;">Contract</span>
<span class="a t" style="left:695.30px;top:591.70px;line-height:24px;font-size:15.9px;font-weight:400;color:#0d1d33;letter-spacing:0.300px;-webkit-text-stroke:0.85px #0d1d33;">Events</span>
<span class="a t" style="left:783.70px;top:591.70px;line-height:24px;font-size:15.9px;font-weight:400;color:#0d1d33;letter-spacing:0.400px;-webkit-text-stroke:0.85px #0d1d33;">Assets</span>
<span class="a t" style="left:870.60px;top:591.70px;line-height:24px;font-size:15.9px;font-weight:400;color:#0d1d33;letter-spacing:-0.025px;-webkit-text-stroke:0.85px #0d1d33;">Cards</span>
<span class="a t" style="left:927.50px;top:593.00px;line-height:18px;font-size:12.3px;font-weight:700;color:#479f87;letter-spacing:-0.750px;-webkit-text-stroke:0.4px #479f87;">New</span>
<span class="a t" style="left:1691.60px;top:589.90px;line-height:25px;font-size:16.9px;font-weight:400;color:#222529;letter-spacing:-0.221px;-webkit-text-stroke:0.3px #222529;">Advanced Filter</span>
<span class="a t" style="left:91.45px;top:663.70px;line-height:29px;font-size:19.5px;font-weight:400;color:#222529;letter-spacing:-0.250px;-webkit-text-stroke:0.3px #222529;">Latest</span>
<span class="a t" style="left:150.75px;top:663.70px;line-height:29px;font-size:19.5px;font-weight:400;color:#222529;letter-spacing:-1.250px;-webkit-text-stroke:0.3px #222529;">23</span>
<span class="a t" style="left:177.20px;top:663.70px;line-height:29px;font-size:19.5px;font-weight:400;color:#222529;letter-spacing:0.400px;-webkit-text-stroke:0.3px #222529;">from</span>
<span class="a t" style="left:222.70px;top:663.70px;line-height:29px;font-size:19.5px;font-weight:400;color:#222529;-webkit-text-stroke:0.3px #222529;">a</span>
<span class="a t" style="left:237.50px;top:663.70px;line-height:29px;font-size:19.5px;font-weight:400;color:#222529;letter-spacing:0.300px;-webkit-text-stroke:0.3px #222529;">total</span>
<span class="a t" style="left:281.60px;top:663.70px;line-height:29px;font-size:19.5px;font-weight:400;color:#222529;letter-spacing:-0.600px;-webkit-text-stroke:0.3px #222529;">of</span>
<span class="a t" style="left:304.30px;top:663.70px;line-height:29px;font-size:19.5px;font-weight:400;color:#222529;letter-spacing:-1.200px;-webkit-text-stroke:0.3px #222529;">23</span>
<span class="a t" style="left:330.60px;top:663.70px;line-height:29px;font-size:19.5px;font-weight:400;color:#222529;letter-spacing:0.064px;-webkit-text-stroke:0.3px #222529;">transactions</span>
<span class="a t" style="left:1592.60px;top:666.30px;line-height:25px;font-size:16.9px;font-weight:400;color:#222529;letter-spacing:-0.271px;-webkit-text-stroke:0.3px #222529;">Download Page Data</span>
<span class="a t" style="left:123.40px;top:731.00px;line-height:25px;font-size:16.9px;font-weight:700;color:#222529;letter-spacing:-0.533px;">Transaction Hash</span>
<span class="a t" style="left:392.50px;top:731.00px;line-height:25px;font-size:16.9px;font-weight:700;color:#222529;letter-spacing:-0.300px;">Method</span>
<span class="a t" style="left:526.80px;top:731.00px;line-height:25px;font-size:16.9px;font-weight:700;color:#222529;letter-spacing:-0.725px;">Block</span>
<span class="a t" style="left:673.70px;top:731.00px;line-height:25px;font-size:16.9px;font-weight:700;color:#3a82be;letter-spacing:-1.200px;">Age</span>
<span class="a t" style="left:856.40px;top:731.00px;line-height:25px;font-size:16.9px;font-weight:700;color:#222529;letter-spacing:-0.867px;">From</span>
<span class="a t" style="left:1196.00px;top:731.00px;line-height:25px;font-size:16.9px;font-weight:700;color:#222529;letter-spacing:-1.100px;">To</span>
<span class="a t" style="left:1606.40px;top:731.00px;line-height:25px;font-size:16.9px;font-weight:700;color:#3a82be;letter-spacing:-1.080px;">Amount</span>
<span class="a t" style="left:1715.00px;top:731.00px;line-height:25px;font-size:16.9px;font-weight:700;color:#3a82be;letter-spacing:-0.967px;">Txn Fee</span>
<span class="a t" style="left:123.40px;top:786.70px;line-height:29px;font-size:19.5px;font-weight:400;color:#3a82be;letter-spacing:0.100px;-webkit-text-stroke:0.3px #3a82be;">0x5b28b2aa49</span>
<span class="a t" style="left:254.50px;top:788.90px;line-height:26px;font-size:17px;font-weight:700;color:#3a82be;letter-spacing:-2.100px;">...</span>
<span class="a t" style="left:434.70px;top:790.80px;line-height:22px;font-size:14.8px;font-weight:400;color:#111315;letter-spacing:0.433px;-webkit-text-stroke:0.3px #111315;">Mint</span>
<span class="a t" style="left:527.80px;top:786.70px;line-height:29px;font-size:19.5px;font-weight:400;color:#3a82be;letter-spacing:-0.257px;-webkit-text-stroke:0.3px #3a82be;">50589091</span>
<span class="a t" style="left:673.30px;top:786.70px;line-height:29px;font-size:19.5px;font-weight:400;color:#222529;letter-spacing:-0.200px;-webkit-text-stroke:0.3px #222529;">187 days ago</span>
<span class="a t" style="left:858.40px;top:786.70px;line-height:29px;font-size:19.5px;font-weight:400;color:#3a82be;letter-spacing:-0.167px;-webkit-text-stroke:0.3px #3a82be;">0x9BC13553...653844509</span>
<span class="a t" style="left:1150.50px;top:790.80px;line-height:21px;font-size:13.7px;font-weight:700;color:#479f87;letter-spacing:-1.000px;-webkit-text-stroke:0.3px #479f87;">IN</span>
<span class="a t" style="left:1217.00px;top:786.70px;line-height:29px;font-size:19.5px;font-weight:400;color:#222529;letter-spacing:-0.343px;-webkit-text-stroke:0.3px #222529;">0x8EaC3198...8AD48A71c</span>
<span class="a t" style="left:1606.50px;top:786.70px;line-height:29px;font-size:19.5px;font-weight:400;color:#222529;-webkit-text-stroke:0.3px #222529;">0</span>
<span class="a t" style="left:1621.60px;top:786.70px;line-height:29px;font-size:19.5px;font-weight:400;color:#222529;letter-spacing:-1.500px;-webkit-text-stroke:0.3px #222529;">BNB</span>
<span class="a t" style="left:1715.00px;top:788.70px;line-height:25px;font-size:16.9px;font-weight:400;color:#6e757c;letter-spacing:0.033px;-webkit-text-stroke:0.3px #6e757c;">0.00010047</span>
<span class="a t" style="left:123.40px;top:850.70px;line-height:29px;font-size:19.5px;font-weight:400;color:#3a82be;letter-spacing:0.250px;-webkit-text-stroke:0.3px #3a82be;">0xc37d0cbb76f</span>
<span class="a t" style="left:260.40px;top:852.90px;line-height:26px;font-size:17px;font-weight:700;color:#3a82be;letter-spacing:-2.100px;">...</span>
<span class="a t" style="left:434.70px;top:854.80px;line-height:22px;font-size:14.8px;font-weight:400;color:#111315;letter-spacing:0.433px;-webkit-text-stroke:0.3px #111315;">Mint</span>
<span class="a t" style="left:527.80px;top:850.70px;line-height:29px;font-size:19.5px;font-weight:400;color:#3a82be;letter-spacing:-0.114px;-webkit-text-stroke:0.3px #3a82be;">50241715</span>
<span class="a t" style="left:673.30px;top:850.70px;line-height:29px;font-size:19.5px;font-weight:400;color:#222529;letter-spacing:-0.200px;-webkit-text-stroke:0.3px #222529;">193 days ago</span>
<span class="a t" style="left:858.40px;top:850.70px;line-height:29px;font-size:19.5px;font-weight:400;color:#3a82be;letter-spacing:-0.167px;-webkit-text-stroke:0.3px #3a82be;">0x9BC13553...653844509</span>
<span class="a t" style="left:1150.50px;top:854.80px;line-height:21px;font-size:13.7px;font-weight:700;color:#479f87;letter-spacing:-1.000px;-webkit-text-stroke:0.3px #479f87;">IN</span>
<span class="a t" style="left:1217.00px;top:850.70px;line-height:29px;font-size:19.5px;font-weight:400;color:#222529;letter-spacing:-0.343px;-webkit-text-stroke:0.3px #222529;">0x8EaC3198...8AD48A71c</span>
<span class="a t" style="left:1606.50px;top:850.70px;line-height:29px;font-size:19.5px;font-weight:400;color:#222529;-webkit-text-stroke:0.3px #222529;">0</span>
<span class="a t" style="left:1621.60px;top:850.70px;line-height:29px;font-size:19.5px;font-weight:400;color:#222529;letter-spacing:-1.500px;-webkit-text-stroke:0.3px #222529;">BNB</span>
<span class="a t" style="left:1715.00px;top:852.70px;line-height:25px;font-size:16.9px;font-weight:400;color:#6e757c;letter-spacing:0.033px;-webkit-text-stroke:0.3px #6e757c;">0.00037797</span>
<span class="a t" style="left:123.40px;top:914.70px;line-height:29px;font-size:19.5px;font-weight:400;color:#3a82be;letter-spacing:0.250px;-webkit-text-stroke:0.3px #3a82be;">0x53efa521019</span>
<span class="a t" style="left:261.40px;top:916.90px;line-height:26px;font-size:17px;font-weight:700;color:#3a82be;letter-spacing:-2.100px;">...</span>
<span class="a t" style="left:434.70px;top:918.80px;line-height:22px;font-size:14.8px;font-weight:400;color:#111315;letter-spacing:0.433px;-webkit-text-stroke:0.3px #111315;">Mint</span>
<span class="a t" style="left:527.80px;top:914.70px;line-height:29px;font-size:19.5px;font-weight:400;color:#3a82be;letter-spacing:0.029px;-webkit-text-stroke:0.3px #3a82be;">47389647</span>
<span class="a t" style="left:674.30px;top:914.70px;line-height:29px;font-size:19.5px;font-weight:400;color:#222529;letter-spacing:-0.291px;-webkit-text-stroke:0.3px #222529;">267 days ago</span>
<span class="a t" style="left:858.40px;top:914.70px;line-height:29px;font-size:19.5px;font-weight:400;color:#3a82be;letter-spacing:-0.167px;-webkit-text-stroke:0.3px #3a82be;">0x9BC13553...653844509</span>
<span class="a t" style="left:1150.50px;top:918.80px;line-height:21px;font-size:13.7px;font-weight:700;color:#479f87;letter-spacing:-1.000px;-webkit-text-stroke:0.3px #479f87;">IN</span>
<span class="a t" style="left:1217.00px;top:914.70px;line-height:29px;font-size:19.5px;font-weight:400;color:#222529;letter-spacing:-0.343px;-webkit-text-stroke:0.3px #222529;">0x8EaC3198...8AD48A71c</span>
<span class="a t" style="left:1606.50px;top:914.70px;line-height:29px;font-size:19.5px;font-weight:400;color:#222529;-webkit-text-stroke:0.3px #222529;">0</span>
<span class="a t" style="left:1621.60px;top:914.70px;line-height:29px;font-size:19.5px;font-weight:400;color:#222529;letter-spacing:-1.500px;-webkit-text-stroke:0.3px #222529;">BNB</span>
<span class="a t" style="left:1715.00px;top:916.70px;line-height:25px;font-size:16.9px;font-weight:400;color:#6e757c;-webkit-text-stroke:0.3px #6e757c;">0.0001732</span>
<span class="a t" style="left:123.40px;top:978.70px;line-height:29px;font-size:19.5px;font-weight:400;color:#3a82be;letter-spacing:0.250px;-webkit-text-stroke:0.3px #3a82be;">0x2fe6c1b9d88</span>
<span class="a t" style="left:260.40px;top:980.90px;line-height:26px;font-size:17px;font-weight:700;color:#3a82be;letter-spacing:-2.100px;">...</span>
<span class="a t" style="left:434.70px;top:982.80px;line-height:22px;font-size:14.8px;font-weight:400;color:#111315;letter-spacing:0.433px;-webkit-text-stroke:0.3px #111315;">Mint</span>
<span class="a t" style="left:527.80px;top:978.70px;line-height:29px;font-size:19.5px;font-weight:400;color:#3a82be;letter-spacing:-0.114px;-webkit-text-stroke:0.3px #3a82be;">47389560</span>
<span class="a t" style="left:674.30px;top:978.70px;line-height:29px;font-size:19.5px;font-weight:400;color:#222529;letter-spacing:-0.291px;-webkit-text-stroke:0.3px #222529;">267 days ago</span>
<span class="a t" style="left:858.40px;top:978.70px;line-height:29px;font-size:19.5px;font-weight:400;color:#3a82be;letter-spacing:-0.167px;-webkit-text-stroke:0.3px #3a82be;">0x9BC13553...653844509</span>
<span class="a t" style="left:1150.50px;top:982.80px;line-height:21px;font-size:13.7px;font-weight:700;color:#479f87;letter-spacing:-1.000px;-webkit-text-stroke:0.3px #479f87;">IN</span>
<span class="a t" style="left:1217.00px;top:978.70px;line-height:29px;font-size:19.5px;font-weight:400;color:#222529;letter-spacing:-0.343px;-webkit-text-stroke:0.3px #222529;">0x8EaC3198...8AD48A71c</span>
<span class="a t" style="left:1606.50px;top:978.70px;line-height:29px;font-size:19.5px;font-weight:400;color:#222529;-webkit-text-stroke:0.3px #222529;">0</span>
<span class="a t" style="left:1621.60px;top:978.70px;line-height:29px;font-size:19.5px;font-weight:400;color:#222529;letter-spacing:-1.500px;-webkit-text-stroke:0.3px #222529;">BNB</span>
<span class="a t" style="left:1715.00px;top:980.70px;line-height:25px;font-size:16.9px;font-weight:400;color:#6e757c;letter-spacing:0.033px;-webkit-text-stroke:0.3px #6e757c;">0.00016466</span>
<span class="a t" style="left:123.40px;top:1042.70px;line-height:29px;font-size:19.5px;font-weight:400;color:#3a82be;letter-spacing:0.218px;-webkit-text-stroke:0.3px #3a82be;">0x8bcd16155c</span>
<span class="a t" style="left:253.80px;top:1044.90px;line-height:26px;font-size:17px;font-weight:700;color:#3a82be;letter-spacing:-2.100px;">...</span>
<span class="a t" style="left:434.70px;top:1046.80px;line-height:22px;font-size:14.8px;font-weight:400;color:#111315;letter-spacing:0.433px;-webkit-text-stroke:0.3px #111315;">Mint</span>
<span class="a t" style="left:527.80px;top:1042.70px;line-height:29px;font-size:19.5px;font-weight:400;color:#3a82be;letter-spacing:-0.114px;-webkit-text-stroke:0.3px #3a82be;">47387923</span>
<span class="a t" style="left:674.30px;top:1042.70px;line-height:29px;font-size:19.5px;font-weight:400;color:#222529;letter-spacing:-0.291px;-webkit-text-stroke:0.3px #222529;">267 days ago</span>
<span class="a t" style="left:858.40px;top:1042.70px;line-height:29px;font-size:19.5px;font-weight:400;color:#3a82be;letter-spacing:-0.167px;-webkit-text-stroke:0.3px #3a82be;">0x9BC13553...653844509</span>
<span class="a t" style="left:1150.50px;top:1046.80px;line-height:21px;font-size:13.7px;font-weight:700;color:#479f87;letter-spacing:-1.000px;-webkit-text-stroke:0.3px #479f87;">IN</span>
<span class="a t" style="left:1217.00px;top:1042.70px;line-height:29px;font-size:19.5px;font-weight:400;color:#222529;letter-spacing:-0.343px;-webkit-text-stroke:0.3px #222529;">0x8EaC3198...8AD48A71c</span>
<span class="a t" style="left:1606.50px;top:1042.70px;line-height:29px;font-size:19.5px;font-weight:400;color:#222529;-webkit-text-stroke:0.3px #222529;">0</span>
<span class="a t" style="left:1621.60px;top:1042.70px;line-height:29px;font-size:19.5px;font-weight:400;color:#222529;letter-spacing:-1.500px;-webkit-text-stroke:0.3px #222529;">BNB</span>
<span class="a t" style="left:1715.00px;top:1044.70px;line-height:25px;font-size:16.9px;font-weight:400;color:#6e757c;letter-spacing:0.033px;-webkit-text-stroke:0.3px #6e757c;">0.00017302</span>
<span class="a t" style="left:123.40px;top:1106.70px;line-height:29px;font-size:19.5px;font-weight:400;color:#3a82be;letter-spacing:0.055px;-webkit-text-stroke:0.3px #3a82be;">0xe7ae4118e4</span>
<span class="a t" style="left:253.00px;top:1108.90px;line-height:26px;font-size:17px;font-weight:700;color:#3a82be;letter-spacing:-2.100px;">...</span>
<span class="a t" style="left:434.70px;top:1110.80px;line-height:22px;font-size:14.8px;font-weight:400;color:#111315;letter-spacing:0.433px;-webkit-text-stroke:0.3px #111315;">Mint</span>
<span class="a t" style="left:527.80px;top:1106.70px;line-height:29px;font-size:19.5px;font-weight:400;color:#3a82be;letter-spacing:0.029px;-webkit-text-stroke:0.3px #3a82be;">47387909</span>
<span class="a t" style="left:674.30px;top:1106.70px;line-height:29px;font-size:19.5px;font-weight:400;color:#222529;letter-spacing:-0.291px;-webkit-text-stroke:0.3px #222529;">267 days ago</span>
<span class="a t" style="left:858.40px;top:1106.70px;line-height:29px;font-size:19.5px;font-weight:400;color:#3a82be;letter-spacing:-0.167px;-webkit-text-stroke:0.3px #3a82be;">0x9BC13553...653844509</span>
<span class="a t" style="left:1150.50px;top:1110.80px;line-height:21px;font-size:13.7px;font-weight:700;color:#479f87;letter-spacing:-1.000px;-webkit-text-stroke:0.3px #479f87;">IN</span>
<span class="a t" style="left:1217.00px;top:1106.70px;line-height:29px;font-size:19.5px;font-weight:400;color:#222529;letter-spacing:-0.343px;-webkit-text-stroke:0.3px #222529;">0x8EaC3198...8AD48A71c</span>
<span class="a t" style="left:1606.50px;top:1106.70px;line-height:29px;font-size:19.5px;font-weight:400;color:#222529;-webkit-text-stroke:0.3px #222529;">0</span>
<span class="a t" style="left:1621.60px;top:1106.70px;line-height:29px;font-size:19.5px;font-weight:400;color:#222529;letter-spacing:-1.500px;-webkit-text-stroke:0.3px #222529;">BNB</span>
<span class="a t" style="left:1715.00px;top:1108.70px;line-height:25px;font-size:16.9px;font-weight:400;color:#6e757c;letter-spacing:0.033px;-webkit-text-stroke:0.3px #6e757c;">0.00235141</span>
<span class="a t" style="left:123.40px;top:1170.70px;line-height:29px;font-size:19.5px;font-weight:400;color:#3a82be;letter-spacing:0.325px;-webkit-text-stroke:0.3px #3a82be;">0x4394f3305d2</span>
<span class="a t" style="left:262.30px;top:1172.90px;line-height:26px;font-size:17px;font-weight:700;color:#3a82be;letter-spacing:-2.100px;">...</span>
<span class="a t" style="left:434.70px;top:1174.80px;line-height:22px;font-size:14.8px;font-weight:400;color:#111315;letter-spacing:0.433px;-webkit-text-stroke:0.3px #111315;">Mint</span>
<span class="a t" style="left:527.80px;top:1170.70px;line-height:29px;font-size:19.5px;font-weight:400;color:#3a82be;letter-spacing:0.029px;-webkit-text-stroke:0.3px #3a82be;">47387607</span>
<span class="a t" style="left:674.30px;top:1170.70px;line-height:29px;font-size:19.5px;font-weight:400;color:#222529;letter-spacing:-0.291px;-webkit-text-stroke:0.3px #222529;">267 days ago</span>
<span class="a t" style="left:858.40px;top:1170.70px;line-height:29px;font-size:19.5px;font-weight:400;color:#3a82be;letter-spacing:-0.167px;-webkit-text-stroke:0.3px #3a82be;">0x9BC13553...653844509</span>
<span class="a t" style="left:1150.50px;top:1174.80px;line-height:21px;font-size:13.7px;font-weight:700;color:#479f87;letter-spacing:-1.000px;-webkit-text-stroke:0.3px #479f87;">IN</span>
<span class="a t" style="left:1217.00px;top:1170.70px;line-height:29px;font-size:19.5px;font-weight:400;color:#222529;letter-spacing:-0.343px;-webkit-text-stroke:0.3px #222529;">0x8EaC3198...8AD48A71c</span>
<span class="a t" style="left:1606.50px;top:1170.70px;line-height:29px;font-size:19.5px;font-weight:400;color:#222529;-webkit-text-stroke:0.3px #222529;">0</span>
<span class="a t" style="left:1621.60px;top:1170.70px;line-height:29px;font-size:19.5px;font-weight:400;color:#222529;letter-spacing:-1.500px;-webkit-text-stroke:0.3px #222529;">BNB</span>
<span class="a t" style="left:1715.00px;top:1172.70px;line-height:25px;font-size:16.9px;font-weight:400;color:#6e757c;letter-spacing:0.033px;-webkit-text-stroke:0.3px #6e757c;">0.00330474</span>
<span class="a t" style="left:123.40px;top:1234.70px;line-height:29px;font-size:19.5px;font-weight:400;color:#3a82be;letter-spacing:0.325px;-webkit-text-stroke:0.3px #3a82be;">0x47181369bfd</span>
<span class="a t" style="left:262.30px;top:1236.90px;line-height:26px;font-size:17px;font-weight:700;color:#3a82be;letter-spacing:-2.100px;">...</span>
<span class="a t" style="left:434.70px;top:1238.80px;line-height:22px;font-size:14.8px;font-weight:400;color:#111315;letter-spacing:0.433px;-webkit-text-stroke:0.3px #111315;">Mint</span>
<span class="a t" style="left:527.80px;top:1234.70px;line-height:29px;font-size:19.5px;font-weight:400;color:#3a82be;letter-spacing:-0.114px;-webkit-text-stroke:0.3px #3a82be;">47027138</span>
<span class="a t" style="left:674.30px;top:1234.70px;line-height:29px;font-size:19.5px;font-weight:400;color:#222529;letter-spacing:-0.291px;-webkit-text-stroke:0.3px #222529;">279 days ago</span>
<span class="a t" style="left:858.40px;top:1234.70px;line-height:29px;font-size:19.5px;font-weight:400;color:#3a82be;letter-spacing:-0.167px;-webkit-text-stroke:0.3px #3a82be;">0x9BC13553...653844509</span>
<span class="a t" style="left:1150.50px;top:1238.80px;line-height:21px;font-size:13.7px;font-weight:700;color:#479f87;letter-spacing:-1.000px;-webkit-text-stroke:0.3px #479f87;">IN</span>
<span class="a t" style="left:1217.00px;top:1234.70px;line-height:29px;font-size:19.5px;font-weight:400;color:#222529;letter-spacing:-0.343px;-webkit-text-stroke:0.3px #222529;">0x8EaC3198...8AD48A71c</span>
<span class="a t" style="left:1606.50px;top:1234.70px;line-height:29px;font-size:19.5px;font-weight:400;color:#222529;-webkit-text-stroke:0.3px #222529;">0</span>
<span class="a t" style="left:1621.60px;top:1234.70px;line-height:29px;font-size:19.5px;font-weight:400;color:#222529;letter-spacing:-1.500px;-webkit-text-stroke:0.3px #222529;">BNB</span>
<span class="a t" style="left:1715.00px;top:1236.70px;line-height:25px;font-size:16.9px;font-weight:400;color:#6e757c;letter-spacing:0.033px;-webkit-text-stroke:0.3px #6e757c;">0.00296912</span>
</body></html>
